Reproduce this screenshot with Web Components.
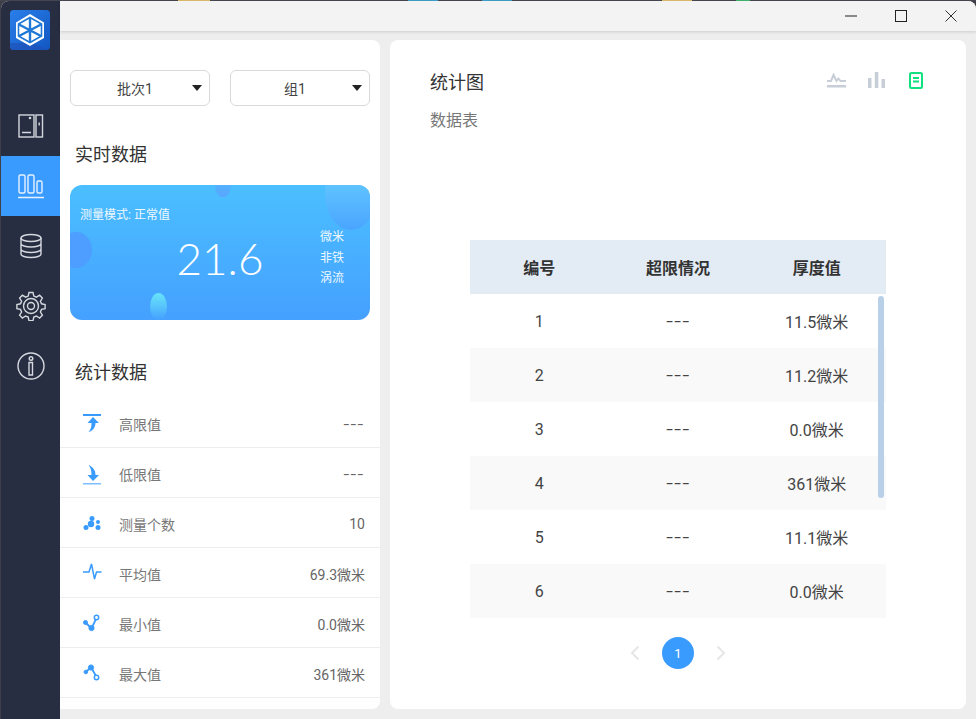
<!DOCTYPE html>
<html lang="zh">
<head>
<meta charset="utf-8">
<title>统计</title>
<style>
  html, body { margin: 0; height: 100%; background: #3e3f48; overflow: hidden; }
  body { font-family: Roboto, "Noto Sans CJK SC", sans-serif; }
</style>
</head>
<body>
<app-window>
  <side-nav slot="nav"></side-nav>
  <title-bar slot="title"></title-bar>
  <left-panel slot="left"></left-panel>
  <table-panel slot="right"></table-panel>
</app-window>

<script>
const FONT = 'Roboto, "Noto Sans CJK SC", sans-serif';

class AppWindow extends HTMLElement {
    constructor() {
        super();
        this.attachShadow({ mode: 'open' });
    }

    connectedCallback() {
        this.shadowRoot.innerHTML = `
            <style>
                :host { display: block; width: 976px; height: 719px; font-family: ${FONT}; }
                .strip { display: flex; height: 1px; background: #45454f; }
                .strip i { display: block; height: 1px; }
                .win { display: flex; height: 718px; background: #eeeeee; border-radius: 8px 8px 0 0; overflow: hidden; margin-left: 1px; }
                .main { flex: 1; display: flex; flex-direction: column; min-width: 0; }
                .body { flex: 1; display: flex; gap: 10px; padding: 9px 10px 10px 0; min-height: 0; }
            </style>
            <div class="strip">
                <i style="width:178px"></i><i style="width:32px;background:#d8b868"></i>
                <i style="width:198px"></i><i style="width:30px;background:#3d9cc4"></i>
                <i style="width:44px"></i><i style="width:30px;background:#3d9cc4"></i>
                <i style="width:150px"></i><i style="width:30px;background:#d8b868"></i>
                <i style="width:44px"></i><i style="width:14px;background:#3faf6a"></i>
            </div>
            <div class="win">
                <slot name="nav"></slot>
                <div class="main">
                    <slot name="title"></slot>
                    <div class="body">
                        <slot name="left"></slot>
                        <slot name="right"></slot>
                    </div>
                </div>
            </div>
        `;
    }
}

class TitleBar extends HTMLElement {
    constructor() {
        super();
        this.attachShadow({ mode: 'open' });
    }

    connectedCallback() {
        this.shadowRoot.innerHTML = `
            <style>
                :host { display: flex; justify-content: flex-end; height: 30px; flex: none; background: #f3f3f3; box-shadow: 0 1px 3px rgba(0,0,0,0.14); position: relative; }
                .btn { width: 50px; height: 29px; display: flex; align-items: center; justify-content: center; }
                svg { display: block; }
            </style>
            <div class="btn"><svg width="12" height="12" viewBox="0 0 12 12"><path d="M0 6h12" stroke="#666" stroke-width="1.6"/></svg></div>
            <div class="btn"><svg width="12" height="12" viewBox="0 0 12 12"><rect x=".5" y=".5" width="11" height="11" fill="none" stroke="#222" stroke-width="1"/></svg></div>
            <div class="btn"><svg width="12" height="12" viewBox="0 0 12 12"><path d="M.5.5l11 11M11.5.5l-11 11" stroke="#333" stroke-width="1"/></svg></div>
        `;
    }
}

class SideNav extends HTMLElement {
    constructor() {
        super();
        this.attachShadow({ mode: 'open' });
    }

    connectedCallback() {
        this.shadowRoot.innerHTML = `
            <style>
                :host { display: flex; flex-direction: column; width: 59px; flex: none; background: #272e42; }
                .logo { width: 40px; height: 40px; margin: 9px 0 46px 9px; border-radius: 3px; display: block; }
                .item { height: 60px; display: flex; align-items: center; justify-content: center; }
                .item.on { background: #3a9bff; }
                svg { display: block; }
                .ic { fill: none; stroke: #d5d8de; stroke-width: 1.4; }
            </style>
            <svg class="logo" viewBox="0 0 40 40">
                <defs><linearGradient id="lg" x1="0" y1="0" x2="1" y2="1"><stop offset="0" stop-color="#2a7fe8"/><stop offset="1" stop-color="#1257c4"/></linearGradient></defs>
                <rect width="40" height="40" rx="3" fill="url(#lg)"/>
                <path d="M0 33 L22 33 L40 40 L0 40Z" fill="#1f4fb4" opacity=".6"/>
                <path d="M20 4 L34 12.500 V28 L20 36 L6 28 V12.500Z" fill="#fff"/>
                <path d="M20 7.500 L31.500 14 V26 L20 32.500 L8.500 26 V14Z" fill="none" stroke="#1f78d6" stroke-width="1.600"/>
                <path d="M9 14.500 L31 26 M31 14.500 L9 26 M20 8 V32" fill="none" stroke="#1f78d6" stroke-width="2.400"/>
            </svg>
            <div class="item"><svg class="ic" width="26" height="26" viewBox="0 0 26 26">
                <rect x="1" y="2" width="15" height="22"/><rect x="18" y="2" width="6.500" height="22"/>
                <path d="M4 19.500h9M21.200 9.500v3"/><circle cx="12" cy="5" r=".6"/>
            </svg></div>
            <div class="item on"><svg width="28" height="26" viewBox="0 0 28 26" fill="none" stroke="#e8f2ff" stroke-width="1.400">
                <rect x="2" y="2" width="6" height="18" rx="1.500"/><rect x="11" y="2" width="6" height="18" rx="1.500"/><rect x="20" y="8" width="5" height="12" rx="1.500"/>
                <path d="M1 24.500h26" stroke-width="1.600"/>
            </svg></div>
            <div class="item"><svg class="ic" width="26" height="26" viewBox="0 0 26 26">
                <ellipse cx="13" cy="5" rx="10" ry="3.500"/><path d="M3 5v16c0 2 4.500 3.500 10 3.500s10-1.500 10-3.500V5M3 10.500c0 2 4.500 3.500 10 3.500s10-1.500 10-3.500M3 16c0 2 4.500 3.500 10 3.500s10-1.500 10-3.500"/>
            </svg></div>
            <div class="item"><svg class="ic" width="30" height="30" viewBox="0 0 30 30">
                <path d="M13 1.500h4l.8 3.600 2.600 1.100 3.200-2 2.800 2.800-2 3.200 1.100 2.600 3.600.8v4l-3.600.8-1.100 2.600 2 3.200-2.800 2.800-3.200-2-2.600 1.100-.8 3.600h-4l-.8-3.600-2.600-1.100-3.200 2-2.800-2.800 2-3.200-1.100-2.600-3.600-.8v-4l3.600-.8 1.100-2.600-2-3.200 2.800-2.800 3.200 2 2.600-1.100z"/>
                <circle cx="15" cy="15" r="7.500"/><circle cx="15" cy="15" r="3.500"/>
            </svg></div>
            <div class="item"><svg class="ic" width="28" height="28" viewBox="0 0 28 28">
                <circle cx="14" cy="14" r="13"/><circle cx="14" cy="6.500" r="1.800"/><path d="M12 10.500h3.500V23H12z"/>
            </svg></div>
        `;
    }
}

class SelectBox extends HTMLElement {
    constructor() {
        super();
        this.attachShadow({ mode: 'open' });
    }

    connectedCallback() {
        this.shadowRoot.innerHTML = `
            <style>
                :host { display: flex; align-items: center; justify-content: center; box-sizing: border-box; width: 140px; height: 36px; border: 1px solid #d9d9d9; border-radius: 6px; font-size: 14px; color: #444; position: relative; padding-right: 10px; background: #fff; }
                .arrow { position: absolute; right: 7px; top: 14px; width: 0; height: 0; border-left: 5px solid transparent; border-right: 5px solid transparent; border-top: 6px solid #222; }
            </style>
            <slot></slot><span class="arrow"></span>
        `;
    }
}

class LiveCard extends HTMLElement {
    constructor() {
        super();
        this.attachShadow({ mode: 'open' });
    }

    connectedCallback() {
        this.shadowRoot.innerHTML = `
            <style>
                :host { display: block; box-sizing: border-box; height: 135px; border-radius: 12px; background: linear-gradient(180deg, #4bbfff 0%, #45a0ff 100%); position: relative; overflow: hidden; color: #fff; padding: 21px 0 0 10px; }
                .mode { font-size: 12px; line-height: 18px; color: #eef8ff; }
                .row { display: flex; margin-top: 2px; }
                .num { flex: 1; text-align: center; font-size: 44px; font-weight: 300; line-height: 56px; padding-top: 4px; margin-left: 40px; font-family: Lato, Roboto, sans-serif; }
                .unit { width: 50px; font-size: 12px; line-height: 20.500px; color: #eef8ff; padding-top: 1px; }
                .blob { position: absolute; border-radius: 50%; }
            </style>
            <span class="blob" style="left:255px;top:-28px;width:52px;height:73px;background:linear-gradient(180deg,#6cd6ff,#4aa4ff)"></span>
            <span class="blob" style="left:145px;top:-12px;width:16px;height:24px;background:linear-gradient(180deg,#4bbfff,#5aa4ff)"></span>
            <span class="blob" style="left:-10px;top:47px;width:32px;height:36px;background:#4d9eff"></span>
            <span class="blob" style="left:80px;top:108px;width:17px;height:27px;background:linear-gradient(180deg,#68e4f8,rgba(74,166,255,0))"></span>
            <div class="mode">测量模式: 正常值</div>
            <div class="row"><div class="num">21.6</div><div class="unit">微米<br>非铁<br>涡流</div></div>
        `;
    }
}

class StatRow extends HTMLElement {
    constructor() {
        super();
        this.attachShadow({ mode: 'open' });
    }

    connectedCallback() {
        this.shadowRoot.innerHTML = `
            <style>
                :host { display: flex; align-items: center; box-sizing: border-box; height: 50px; border-bottom: 1px solid #eeeeee; padding: 3px 15px 0 23px; font-size: 14px; color: #777; }
                .icon { width: 20px; height: 22px; flex: none; margin-right: 16px; margin-top: 1px; }
                .val { margin-left: auto; color: #666; }
                ::slotted(svg) { display: block; }
            </style>
            <span class="icon"><slot name="icon"></slot></span>
            <span><slot name="label"></slot></span>
            <span class="val"><slot name="value"></slot></span>
        `;
    }
}

class LeftPanel extends HTMLElement {
    constructor() {
        super();
        this.attachShadow({ mode: 'open' });
    }

    connectedCallback() {
        const dash = '<span style="display:inline-block;letter-spacing:1px;transform:scaleX(1.45);transform-origin:right center">---</span>';
        const rows = [
            ['高限值', dash, '<rect x="0" y="0" width="18" height="2" fill="#3a9bff"/><path d="M10 3l6 6h-3.500c0 4-2.500 8-7 9 2.500-2.500 3-5 3-9H4.500z" fill="#3a9bff"/>'],
            ['低限值', dash, '<path d="M10 17l6-6h-3.500c0-5-2.500-8-7-10 2.500 3 3 6 3 10H4.500z" fill="#3a9bff"/><rect x="0" y="19" width="18" height="1.500" fill="#7fbcff"/>'],
            ['测量个数', '10', '<g fill="#3a9bff"><circle cx="9" cy="4.500" r="2.500"/><circle cx="8" cy="10" r="3.200"/><circle cx="15" cy="8" r="2"/><circle cx="3" cy="13.500" r="2.500"/><circle cx="15" cy="13.500" r="2.500"/></g>'],
            ['平均值', '69.3微米', '<path d="M0 8h6l2.500-8 3 15 2-7h5" fill="none" stroke="#3a9bff" stroke-width="1.500"/>'],
            ['最小值', '0.0微米', '<g fill="#3a9bff" stroke="#3a9bff"><path d="M3 9l5.500 5.500L13.500 4" stroke-width="1.800" fill="none"/><circle cx="2.500" cy="8.500" r="2"/><circle cx="8.500" cy="14" r="2.600"/><circle cx="13.500" cy="3.500" r="2.200" fill="#fff" stroke-width="1.500"/></g>'],
            ['最大值', '361微米', '<g fill="#3a9bff" stroke="#3a9bff"><path d="M3 8l5-5 5.500 10" stroke-width="1.800" fill="none"/><circle cx="2.800" cy="8" r="1.800"/><circle cx="8" cy="3.500" r="2.600"/><circle cx="13.500" cy="13.500" r="2.200" fill="#fff" stroke-width="1.500"/></g>']
        ];
        this.shadowRoot.innerHTML = `
            <style>
                :host { display: block; width: 320px; height: 669px; box-sizing: border-box; background: #fff; border-radius: 0 8px 8px 0; padding-top: 30px; overflow: hidden; }
                .sel { display: flex; justify-content: space-between; padding: 0 10px; }
                h3 { margin: 0; font-size: 18px; font-weight: 400; line-height: 24px; color: #333; padding-left: 15px; }
                .h1 { margin-top: 37px; margin-bottom: 18px; }
                .h2 { margin-top: 41px; margin-bottom: 13px; }
                live-card { margin: 0 10px; }
                svg { overflow: visible; }
            </style>
            <div class="sel"><select-box>批次1</select-box><select-box>组1</select-box></div>
            <h3 class="h1">实时数据</h3>
            <live-card></live-card>
            <h3 class="h2">统计数据</h3>
            ${rows.map(r => `
                <stat-row>
                    <svg slot="icon" width="20" height="22" viewBox="0 0 20 22">${r[2]}</svg>
                    <span slot="label">${r[0]}</span>
                    <span slot="value">${r[1]}</span>
                </stat-row>`).join('')}
        `;
    }
}

class DataTable extends HTMLElement {
    constructor() {
        super();
        this.attachShadow({ mode: 'open' });
    }

    connectedCallback() {
        const rows = [['1', '11.5微米'], ['2', '11.2微米'], ['3', '0.0微米'], ['4', '361微米'], ['5', '11.1微米'], ['6', '0.0微米']];
        this.shadowRoot.innerHTML = `
            <style>
                :host { display: block; width: 416px; position: relative; font-size: 16px; color: #444; }
                .row { display: grid; grid-template-columns: 1fr 1fr 1fr; height: 54px; align-items: center; text-align: center; background: #fff; }
                .row:nth-child(even) { background: #f9f9f9; }
                .dash { display: block; letter-spacing: 1px; transform: scaleX(1.5); }
                .head { display: grid; grid-template-columns: 1fr 1fr 1fr; height: 54px; align-items: center; text-align: center; background: #e3ebf4; font-weight: 700; color: #333; }
                .bar { position: absolute; left: 408px; top: 56px; width: 6px; height: 202px; border-radius: 3px; background: #b8d0e8; }
            </style>
            <div class="head"><span>编号</span><span>超限情况</span><span>厚度值</span></div>
            <div>
                ${rows.map(r => `<div class="row"><span>${r[0]}</span><span class="dash">---</span><span>${r[1]}</span></div>`).join('')}
            </div>
            <span class="bar"></span>
        `;
    }
}

class PagerBar extends HTMLElement {
    constructor() {
        super();
        this.attachShadow({ mode: 'open' });
    }

    connectedCallback() {
        this.shadowRoot.innerHTML = `
            <style>
                :host { display: flex; justify-content: center; align-items: center; gap: 12px; height: 32px; }
                .page { width: 32px; height: 32px; border-radius: 50%; background: #3a9bff; color: #fff; font-size: 13px; display: flex; align-items: center; justify-content: center; }
                .nav { width: 30px; height: 30px; display: flex; align-items: center; justify-content: center; }
            </style>
            <span class="nav"><svg width="10" height="16" viewBox="0 0 10 16"><path d="M8.500 1.500L2 8l6.500 6.500" fill="none" stroke="#e6e6e6" stroke-width="2"/></svg></span>
            <span class="page">1</span>
            <span class="nav"><svg width="10" height="16" viewBox="0 0 10 16"><path d="M1.500 1.500L8 8l-6.500 6.500" fill="none" stroke="#e6e6e6" stroke-width="2"/></svg></span>
        `;
    }
}

class TablePanel extends HTMLElement {
    constructor() {
        super();
        this.attachShadow({ mode: 'open' });
    }

    connectedCallback() {
        this.shadowRoot.innerHTML = `
            <style>
                :host { display: block; flex: 1; width: 576px; height: 669px; box-sizing: border-box; background: #fff; border-radius: 8px; padding: 31px 40px 0; }
                .top { display: flex; justify-content: space-between; align-items: center; height: 24px; }
                .t { font-size: 18px; line-height: 24px; color: #333; }
                .icons { display: flex; gap: 21px; align-items: center; margin: -6px 3px 0 0; }
                .bars { margin-right: 3px; }
                .sub { font-size: 16px; color: #777; margin-top: 14px; line-height: 24px; }
                data-table { margin: 107px 0 0 40px; }
                pager-bar { margin: 19px 0 0 40px; width: 416px; }
                svg { display: block; }
            </style>
            <div class="top">
                <span class="t">统计图</span>
                <span class="icons">
                    <svg width="19" height="16" viewBox="0 0 19 16"><path d="M0 9h4l2.500-6 3 6 2-2.500 2 2.500h5.500" fill="none" stroke="#c7ced8" stroke-width="2"/><rect y="13" width="19" height="2.500" fill="#c7ced8"/></svg>
                    <svg class="bars" width="18" height="16" viewBox="0 0 18 16"><g fill="#c7ced8"><rect x="1" y="6" width="3.500" height="10"/><rect x="7.800" y="0" width="3.500" height="16"/><rect x="14.500" y="7" width="3.500" height="9"/></g></svg>
                    <svg width="14" height="17" viewBox="0 0 14 17"><rect x="1" y="1" width="12" height="15" rx="1.500" fill="#fff" stroke="#10e080" stroke-width="2"/><path d="M4 6h6M4 9.500h6" stroke="#10e080" stroke-width="2"/></svg>
                </span>
            </div>
            <div class="sub">数据表</div>
            <data-table></data-table>
            <pager-bar></pager-bar>
        `;
    }
}

customElements.define('app-window', AppWindow);
customElements.define('title-bar', TitleBar);
customElements.define('side-nav', SideNav);
customElements.define('select-box', SelectBox);
customElements.define('live-card', LiveCard);
customElements.define('stat-row', StatRow);
customElements.define('left-panel', LeftPanel);
customElements.define('data-table', DataTable);
customElements.define('pager-bar', PagerBar);
customElements.define('table-panel', TablePanel);
</script>
</body>
</html>
